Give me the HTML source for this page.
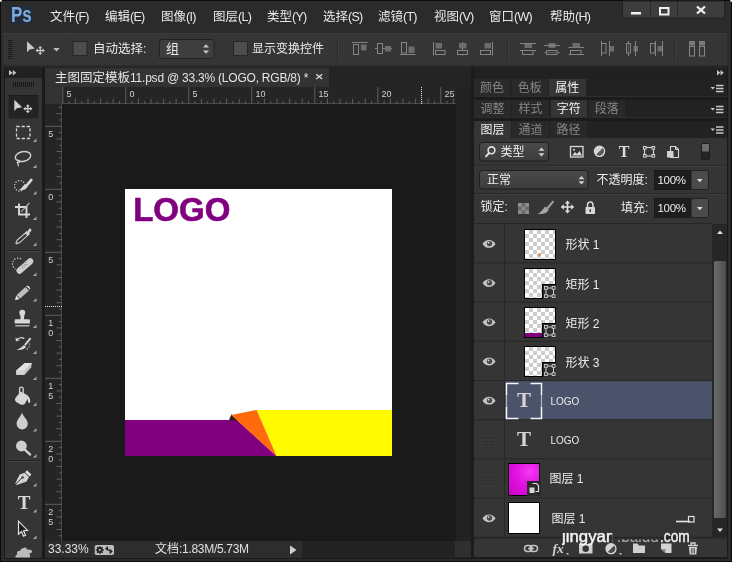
<!DOCTYPE html>
<html><head><meta charset="utf-8">
<style>
html,body{margin:0;padding:0;background:#1e1e1e;}
body{width:732px;height:562px;position:relative;overflow:hidden;font-family:"Liberation Sans","Noto Sans CJK SC",sans-serif;font-size:12px;color:#e6e6e6;}
.a{position:absolute;}
.t{position:absolute;white-space:nowrap;line-height:16px;}
svg{position:absolute;overflow:visible;}
.mi{top:9px;font-size:12.5px;color:#e8e8e8;}
.rl{font-size:9px;fill:#d0d0d0;font-family:"Liberation Sans",sans-serif;}
.tab{position:absolute;height:18px;line-height:18px;font-size:12px;text-align:center;color:#868686;background:#292929;overflow:hidden;}
.tab.on{background:#353535;color:#f0f0f0;}
.ln{position:absolute;font-size:12px;line-height:16px;color:#ececec;white-space:nowrap;}
</style></head><body><div id="root" style="position:absolute;left:0;top:0;width:732px;height:562px;will-change:transform;">
<div class="a" style="left:0;top:0;width:730px;height:560px;background:#2b2b2b;border:1px solid #0c0c0c;"></div>
<div class="a" style="left:0;top:0;width:2px;height:1.5px;background:#e8e8e8;border-bottom-right-radius:2px;"></div>
<div class="a" style="left:730px;top:0;width:2px;height:1.5px;background:#e8e8e8;border-bottom-left-radius:2px;"></div>
<div class="a" style="left:4px;top:66px;width:724px;height:492.5px;background:#1a1a1a;"></div>
<div class="a" style="left:3px;top:1px;width:724px;height:31px;background:#2b2b2b;"></div>
<div class="a" style="left:3px;top:33px;width:724px;height:32px;background:#353535;"></div>
<div class="a" style="left:3px;top:33px;width:724px;height:1px;background:#3b3b3b;"></div>
<div class="a" style="left:3px;top:65px;width:724px;height:2px;background:#2a2a2a;"></div>
<div class="a" style="left:10px;top:6px;width:23px;height:18px;background:rgba(20,45,80,0.35);border-radius:2px;"></div><div class="t" style="left:11px;top:2px;font-size:21.5px;line-height:26px;font-weight:bold;color:#7aabe2;transform:scaleX(0.79);transform-origin:0 0;">Ps</div>
<div class="t mi" style="left:50px;">文件<span style="font-size:12.5px;letter-spacing:-0.75px;">(F)</span></div>
<div class="t mi" style="left:105px;">编辑<span style="font-size:12.5px;letter-spacing:-0.75px;">(E)</span></div>
<div class="t mi" style="left:161px;">图像<span style="font-size:12.5px;letter-spacing:-0.75px;">(I)</span></div>
<div class="t mi" style="left:213px;">图层<span style="font-size:12.5px;letter-spacing:-0.75px;">(L)</span></div>
<div class="t mi" style="left:267px;">类型<span style="font-size:12.5px;letter-spacing:-0.75px;">(Y)</span></div>
<div class="t mi" style="left:323px;">选择<span style="font-size:12.5px;letter-spacing:-0.75px;">(S)</span></div>
<div class="t mi" style="left:378px;">滤镜<span style="font-size:12.5px;letter-spacing:-0.75px;">(T)</span></div>
<div class="t mi" style="left:434px;">视图<span style="font-size:12.5px;letter-spacing:-0.75px;">(V)</span></div>
<div class="t mi" style="left:489px;">窗口<span style="font-size:12.5px;letter-spacing:-0.75px;">(W)</span></div>
<div class="t mi" style="left:550px;">帮助<span style="font-size:12.5px;letter-spacing:-0.75px;">(H)</span></div>
<div class="a" style="left:45px;top:67px;width:426px;height:491px;background:#1a1a1a;"></div>
<div class="a" style="left:45px;top:67px;width:426px;height:20px;background:#242424;"></div>
<div class="a" style="left:45px;top:67.5px;width:284px;height:19.5px;background:#333333;"></div>
<div class="t" style="left:55px;top:69.700px;font-size:12.5px;color:#e4e4e4;">主图固定模板<span style="font-size:12px;letter-spacing:-0.22px;">11.psd @ 33.3% (LOGO, RGB/8) *</span></div>
<svg style="left:315px;top:73px;" width="9" height="7" viewBox="0 0 9 7"><path d="M1.200 1.200l6 4.800M7.200 1.200l-6 4.800" stroke="#dcdcdc" stroke-width="1.250" fill="none"/></svg>
<svg style="left:0;top:0;" width="732" height="562" viewBox="0 0 732 562">
<rect x="45" y="87" width="411" height="17" fill="#252525"/>
<rect x="45" y="87" width="17" height="454" fill="#252525"/>
<rect x="45" y="87" width="17" height="17" fill="#333333"/>
<path d="M62 103.5H456M61.5 104V541" stroke="#484848" stroke-width="1" fill="none"/>
<path d="M62.8 104v-17 M69.1 104v-3 M75.4 104v-5.5 M81.7 104v-3 M88.0 104v-5.5 M94.3 104v-3 M100.6 104v-5.5 M106.9 104v-3 M113.2 104v-5.5 M119.5 104v-3 M125.8 104v-17 M132.1 104v-3 M138.4 104v-5.5 M144.7 104v-3 M151.0 104v-5.5 M157.3 104v-3 M163.6 104v-5.5 M169.9 104v-3 M176.2 104v-5.5 M182.5 104v-3 M188.8 104v-17 M195.1 104v-3 M201.4 104v-5.5 M207.7 104v-3 M214.0 104v-5.5 M220.3 104v-3 M226.6 104v-5.5 M232.9 104v-3 M239.2 104v-5.5 M245.5 104v-3 M251.8 104v-17 M258.1 104v-3 M264.4 104v-5.5 M270.7 104v-3 M277.0 104v-5.5 M283.3 104v-3 M289.6 104v-5.5 M295.9 104v-3 M302.2 104v-5.5 M308.5 104v-3 M314.8 104v-17 M321.1 104v-3 M327.4 104v-5.5 M333.7 104v-3 M340.0 104v-5.5 M346.3 104v-3 M352.6 104v-5.5 M358.9 104v-3 M365.2 104v-5.5 M371.5 104v-3 M377.8 104v-17 M384.1 104v-3 M390.4 104v-5.5 M396.7 104v-3 M403.0 104v-5.5 M409.3 104v-3 M415.6 104v-5.5 M421.9 104v-3 M428.2 104v-5.5 M434.5 104v-3 M440.8 104v-17 M447.1 104v-3 M453.4 104v-5.5" stroke="#5e5e5e" stroke-width="1" fill="none"/>
<text class="rl" x="66.5" y="97.2">5</text>
<text class="rl" x="129.5" y="97.2">0</text>
<text class="rl" x="192.5" y="97.2">5</text>
<text class="rl" x="255.5" y="97.2">10</text>
<text class="rl" x="318.5" y="97.2">15</text>
<text class="rl" x="381.5" y="97.2">20</text>
<text class="rl" x="444.5" y="97.2">25</text>
<path d="M62 107.4h-3 M62 113.7h-5.5 M62 120.0h-3 M62 126.3h-17 M62 132.6h-3 M62 138.9h-5.5 M62 145.2h-3 M62 151.5h-5.5 M62 157.8h-3 M62 164.1h-5.5 M62 170.4h-3 M62 176.7h-5.5 M62 183.0h-3 M62 189.3h-17 M62 195.6h-3 M62 201.9h-5.5 M62 208.2h-3 M62 214.5h-5.5 M62 220.8h-3 M62 227.1h-5.5 M62 233.4h-3 M62 239.7h-5.5 M62 246.0h-3 M62 252.3h-17 M62 258.6h-3 M62 264.9h-5.5 M62 271.2h-3 M62 277.5h-5.5 M62 283.8h-3 M62 290.1h-5.5 M62 296.4h-3 M62 302.7h-5.5 M62 309.0h-3 M62 315.3h-17 M62 321.6h-3 M62 327.9h-5.5 M62 334.2h-3 M62 340.5h-5.5 M62 346.8h-3 M62 353.1h-5.5 M62 359.4h-3 M62 365.7h-5.5 M62 372.0h-3 M62 378.3h-17 M62 384.6h-3 M62 390.9h-5.5 M62 397.2h-3 M62 403.5h-5.5 M62 409.8h-3 M62 416.1h-5.5 M62 422.4h-3 M62 428.7h-5.5 M62 435.0h-3 M62 441.3h-17 M62 447.6h-3 M62 453.9h-5.5 M62 460.2h-3 M62 466.5h-5.5 M62 472.8h-3 M62 479.1h-5.5 M62 485.4h-3 M62 491.7h-5.5 M62 498.0h-3 M62 504.3h-17 M62 510.6h-3 M62 516.9h-5.5 M62 523.2h-3 M62 529.5h-5.5 M62 535.8h-3" stroke="#5e5e5e" stroke-width="1" fill="none"/>
<text class="rl" x="48.2" y="136.9">5</text>
<text class="rl" x="48.2" y="199.9">0</text>
<text class="rl" x="48.2" y="262.9">5</text>
<text class="rl" x="48.2" y="325.9">1</text>
<text class="rl" x="48.2" y="336.2">0</text>
<text class="rl" x="48.2" y="388.9">1</text>
<text class="rl" x="48.2" y="399.2">5</text>
<text class="rl" x="48.2" y="451.9">2</text>
<text class="rl" x="48.2" y="462.2">0</text>
<text class="rl" x="48.2" y="514.9">2</text>
<text class="rl" x="48.2" y="525.2">5</text>
<path d="M421.500 87v17M45 306.500h17" stroke="#e0e0e0" stroke-width="1" stroke-dasharray="1 1" fill="none"/>
</svg>
<div class="a" style="left:125px;top:188.5px;width:267px;height:267.5px;background:#fff;"></div>
<div class="t" style="left:133.2px;top:189.5px;font-size:33px;line-height:40px;font-weight:bold;color:#800080;-webkit-text-stroke:0.6px #800080;">LOGO</div>
<svg style="left:125px;top:400px;" width="267" height="56" viewBox="125 400 267 56">
<polygon points="125,420 237,420 276.5,456 125,456" fill="#800080"/>
<polygon points="256.6,410 392,410 392,456 276.5,456" fill="#fffa00"/>
<polygon points="229,420 231.5,414.3 239,421.5" fill="#3a1a20"/>
<polygon points="231.2,415 256.6,410 276.5,456" fill="#ff6a0c"/>
</svg>
<div class="a" style="left:456px;top:87px;width:15px;height:454px;background:#222222;"></div>
<div class="a" style="left:45px;top:541px;width:426px;height:17px;background:#232323;"></div>
<div class="a" style="left:45px;top:541px;width:257px;height:17px;background:#2d2d2d;"></div>
<div class="a" style="left:455px;top:541px;width:16px;height:16px;background:#2f2f2f;"></div>
<div class="t" style="left:48px;top:541px;font-size:12px;color:#e0e0e0;">33.33%</div>
<div class="t" style="left:155px;top:541px;font-size:12px;color:#e0e0e0;">文档<span style="letter-spacing:-0.3px;">:1.83M/5.73M</span></div>
<svg style="left:94px;top:544px;" width="21" height="12" viewBox="94 544 21 12"><rect x="94.700" y="545" width="19.300" height="10" rx="1.800" fill="#bdbdbd"/><circle cx="99.800" cy="550" r="2.900" fill="#262626"/><path d="M99.800 546v8M95.800 550h8M97 547.200l5.600 5.600M102.600 547.200l-5.600 5.600" stroke="#262626" stroke-width="1.300" fill="none"/><circle cx="99.800" cy="550" r="1.100" fill="#bdbdbd"/><path d="M105 548.500l3-2.500v5zM112.800 551.500l-3.200 2.700v-5.400z" fill="#262626"/><path d="M106 548.500l5.500 3" stroke="#262626" stroke-width="1.400" fill="none"/></svg>
<svg style="left:289px;top:545px;" width="8" height="10"><path d="M1 0.5L7.5 5L1 9.5z" fill="#d0d0d0"/></svg>
<!-- TOOLS PANEL -->
<div class="a" style="left:5px;top:67px;width:37px;height:491px;background:#353535;"></div>
<div class="a" style="left:5px;top:67px;width:37px;height:11px;background:#212121;"></div>
<div class="a" style="left:8px;top:95px;width:30.500px;height:23.500px;background:#232323;border:1px solid #2c2c2c;box-sizing:border-box;border-top-color:#1b1b1b;"></div>
<svg style="left:0;top:0;" width="50" height="562" viewBox="0 0 50 562">
<g fill="#d2d2d2" stroke="none">
<!-- collapse >> -->
<path d="M9 70l3.6 2.7L9 75.4zM12.8 70l3.6 2.7L12.8 75.4z" fill="#c8c8c8"/>
<!-- grip -->
<path d="M13.5 82v5M15.5 82v5M17.5 82v5M19.5 82v5M21.500 82v5M23.500 82v5M25.500 82v5M27.500 82v5M29.500 82v5M31.500 82v5M33.500 82v5" stroke="#161616" stroke-width="1" fill="none"/>
<!-- corner triangles -->
<g fill="#a8a8a8">
<path d="M36.5 138.5v3.5h-3.5z"/><path d="M36.5 164.5v3.5h-3.5z"/><path d="M36.5 191v3.5h-3.5z"/><path d="M36.5 216.5v3.5h-3.5z"/><path d="M36.5 242.5v3.5h-3.5z"/>
<path d="M36.5 272.5v3.5h-3.5z"/><path d="M36.5 298v3.5h-3.5z"/><path d="M36.5 324.5v3.5h-3.5z"/><path d="M36.5 350.5v3.5h-3.5z"/><path d="M36.5 376.5v3.5h-3.5z"/>
<path d="M36.5 402.5v3.5h-3.5z"/><path d="M36.5 428v3.5h-3.5z"/><path d="M36.5 454v3.5h-3.5z"/><path d="M36.5 483v3.5h-3.5z"/><path d="M36.5 509v3.5h-3.5z"/><path d="M36.5 535.5v3.5h-3.5z"/>
</g>
<!-- separators -->
<path d="M8 250.5h32M8 460.5h32" stroke="#262626" stroke-width="1" fill="none"/>
<path d="M8 251.5h32M8 461.5h32" stroke="#414141" stroke-width="1" fill="none"/>
<!-- move -->
<path d="M14.3 99.8v11.2l2.6-2.7l5.3-1.1z" fill="#cfcfcf"/>
<path d="M27.8 104.2l2 2.3h-1.4v1.6h1.7v-1.4l2.3 2l-2.3 2v-1.4h-1.7v1.7h1.4l-2 2.3l-2-2.3h1.4v-1.7h-1.7v1.4l-2.3-2l2.3-2v1.4h1.7v-1.6h-1.4z" fill="#d8d8d8"/>
<!-- marquee -->
<rect x="16.5" y="126.5" width="13.5" height="12" fill="none" stroke="#d8d8d8" stroke-width="1.3" stroke-dasharray="3.2 1.9"/>
<!-- lasso -->
<ellipse cx="23" cy="156.5" rx="7.8" ry="4.8" transform="rotate(-12 23 156.5)" fill="none" stroke="#cfcfcf" stroke-width="1.4"/>
<path d="M17.3 160.2c1.5-0.3 2.6 0.6 2.1 1.8c-0.5 1-2 0.8-2.3-0.2c0.3 1.6 1.6 2.6 1.3 4.6" fill="none" stroke="#cfcfcf" stroke-width="1.2"/>
<!-- quick select -->
<circle cx="19.8" cy="185.8" r="5.3" fill="none" stroke="#d8d8d8" stroke-width="1.3" stroke-dasharray="1.2 1.6"/>
<path d="M31 178.300l2 1.700l-5.600 6.800l-2.100-1.800z" fill="#d6d6d6"/>
<path d="M24.800 184.200l2.800 2.400c-0.800 2.400-3.800 4-8.800 3.400c2.400-1 3.400-3.200 6-5.800z" fill="#d6d6d6"/>
<!-- crop -->
<path d="M19 203.5v11h11M15 207h11.5v11" fill="none" stroke="#d8d8d8" stroke-width="1.9"/>
<path d="M29.5 202.8l-8.5 9.2" fill="none" stroke="#c0c0c0" stroke-width="1.1"/>
<!-- eyedropper -->
<path d="M29.3 228.7c1.2-0.6 2.6 0.8 2 2l-2.2 2.6l0.8 0.9l-1.3 1.4l-3.5-3.3l1.4-1.3l0.8 0.7z" fill="#d6d6d6"/>
<path d="M25.4 233.1l2.3 2.2l-8 7.3l-3.2 1.2l-0.6-0.6l1.3-3z" fill="none" stroke="#d0d0d0" stroke-width="1.1"/>
<!-- healing -->
<path d="M19.6 270.600l10.600-9.200" stroke="#cdcdcd" stroke-width="6.200" stroke-linecap="round" fill="none"/>
<path d="M22.300 267.300l1 1M24.200 265.700l1 1M26 264.100l1 1M21.600 265.200l1 1M23.500 263.600l1 1M25.300 262l1 1" stroke="#6a6a6a" stroke-width="0.9" fill="none"/>
<path d="M21 258.9a5.6 5.6 0 0 0 -5.6 10" fill="none" stroke="#d8d8d8" stroke-width="1.3" stroke-dasharray="1.2 1.6"/>
<!-- pencil -->
<path d="M26.2 286.2l3.6 3.4c1.4-1.6-1.6-4.8-3.6-3.4z" fill="#e0e0e0"/>
<path d="M25.4 287l3.6 3.4l-8.8 8l-3.5-3.4z" fill="#bdbdbd"/>
<path d="M16.2 295.6l3.4 3.3l-4.6 1.4z" fill="#e4e4e4"/>
<!-- stamp -->
<path d="M22.4 309.800a2.900 2.900 0 0 1 2.900 2.900c0 1.600-1.200 2.400-1.200 4v2.600h4.800a1 1 0 0 1 1 1v3.200h-15.200v-3.200a1 1 0 0 1 1-1h4.800v-2.600c0-1.600-1.200-2.400-1.200-4a2.900 2.900 0 0 1 2.900-2.900z" fill="#d8d8d8"/>
<path d="M15.300 325.800h14.200" stroke="#d0d0d0" stroke-width="1.200" fill="none"/>
<!-- history brush -->
<path d="M29.8 337.600l1.500 1.200l-5.600 7l-1.500-1.200z" fill="#d6d6d6"/>
<path d="M24 345l1.900 1.700c-0.700 2-3.600 3.600-9.700 3.300c3-0.800 4.800-2.600 7.800-5z" fill="#d6d6d6"/>
<path d="M16.500 340.300c2-2.600 5.400-3.200 7.800-1.600" fill="none" stroke="#d0d0d0" stroke-width="1.500"/>
<path d="M15.500 337.400l0.400 4.200l3.800-1.400z" fill="#d0d0d0"/>
<path d="M29.600 343.500a6.500 6.500 0 0 1 -3.200 6" fill="none" stroke="#c8c8c8" stroke-width="1.200" stroke-dasharray="1.200 1.500"/>
<!-- eraser -->
<path d="M16.200 370.600l8.600-7.600h7l-0.600 4.600l-6.600 7.200h-8.400z" fill="#c4c4c4"/>
<path d="M16.200 370.600l8.600-7.600h7l-7.400 7.600z" fill="#e2e2e2"/>
<path d="M16.200 370.600h8.200v4.200h-8.200z" fill="#d4d4d4"/>
<!-- bucket -->
<path d="M20.600 391.600l6.400 3.400c1.600 1 1.600 2.400 0.600 4l-2.600 4.400c-1 1.600-2.800 1.800-4.400 1l-4-2.200c-1.600-1-2-2.600-1.200-4.200z" fill="#d6d6d6"/>
<path d="M19.600 394v-5c0-2.600 3.600-2.600 3.600 0v7" fill="none" stroke="#d6d6d6" stroke-width="1.300"/>
<path d="M27.200 395.400c2.200 1.600 3.200 3.600 3 6.400c-0.100 1.500-2.200 1.500-2.200 0c0-2-0.300-3.600-0.800-6.400z" fill="#e0e0e0"/>
<!-- blur drop -->
<path d="M22 412.600c1 4 5.800 6.800 5.800 11.200a5.600 5.600 0 0 1 -11.200 0c0-4.400 4.400-7.200 5.400-11.200z" fill="#cfcfcf"/>
<!-- dodge -->
<circle cx="21.400" cy="446" r="5.400" fill="#cfcfcf"/>
<path d="M24.800 449.600l5.400 5" stroke="#d6d6d6" stroke-width="2.200" stroke-linecap="round" fill="none"/>
<!-- pen -->
<path d="M27 470.200l4.400 4.200l-1.800 2l-4.500-4.200z" fill="#dedede"/>
<path d="M24.600 472.800l4.400 4.200l-2.400 4.600l-10 3.400l-1.400-1.400l4.400-9.200z" fill="#d2d2d2"/>
<path d="M15.800 484l6.200-6.200" stroke="#353535" stroke-width="1" fill="none"/>
<circle cx="22.600" cy="477.400" r="1.200" fill="#353535"/>
<!-- path select arrow -->
<path d="M18.500 521.200v13l3-2.700l2 4.600l2-0.900l-2-4.500l4-0.300z" fill="#1c1c1c" stroke="#e0e0e0" stroke-width="1.200" stroke-linejoin="miter"/>
<!-- custom shape -->
<path d="M24 548c1.600-1.200 3.200 0 2.800 1.800c2-1 5 0 5.400 1.400c0.300 1.400-2 2-3.400 2.600c1.400 1 2 2.600 0.800 3.800l-14 0c-0.800-1.400 0.400-2.800 2-3.400c-1.600-1.600 0-3.800 2.400-3.200c0.200-1.800 2.400-3 4-3z" fill="#bcbcbc"/>
</g>
<!-- T -->
<text x="24.200" y="509" text-anchor="middle" font-family="Liberation Serif, serif" font-size="19" font-weight="bold" fill="#d8d8d8">T</text>
</svg>
<!-- OPTIONS BAR -->
<svg style="left:0;top:0;" width="732" height="70" viewBox="0 0 732 70">
<!-- grip -->
<path d="M8 40.500h4.500M8 42.500h4.500M8 44.500h4.500M8 46.500h4.500M8 48.500h4.500M8 50.500h4.500M8 52.500h4.500M8 54.500h4.500M8 56.500h4.500M8 58.500h4.500" stroke="#1d1d1d" stroke-width="1" fill="none"/>
<!-- move icon -->
<path d="M27 41.300v11l2.600-2.700l5.200-1z" fill="#c8c8c8"/>
<path d="M40.200 46l2 2.300h-1.400v1.600h1.700v-1.400l2.300 2l-2.300 2v-1.400h-1.700v1.700h1.400l-2 2.300l-2-2.300h1.400v-1.700h-1.700v1.400l-2.300-2l2.300-2v1.400h1.700v-1.600h-1.400z" fill="#d0d0d0"/>
<path d="M53.200 48h6.600l-3.300 3.500z" fill="#bdbdbd"/>
<path d="M66.500 37v25" stroke="#303030" stroke-width="1" fill="none"/>
<!-- checkbox 1 -->
<rect x="73" y="41.500" width="14" height="14" fill="#4d4d4d" stroke="#262626" stroke-width="1"/>
<!-- dropdown -->
<rect x="159.500" y="39.500" width="54.500" height="19" rx="2.500" fill="#3e3e3e" stroke="#222222" stroke-width="1"/>
<path d="M203 47.500l3-3.200l3 3.200zM203 50.500l3 3.200l3-3.200z" fill="#c8c8c8"/>
<!-- checkbox 2 -->
<rect x="233.500" y="41.500" width="14" height="14" fill="#4d4d4d" stroke="#262626" stroke-width="1"/>
<path d="M337.500 37v25M507.500 37v25M674.500 37v25" stroke="#2a2a2a" stroke-width="1" fill="none"/>
<path d="M338.500 37v25M508.500 37v25M675.500 37v25" stroke="#3d3d3d" stroke-width="1" fill="none"/>
<g stroke="#858585" stroke-width="1" fill="none">
<!-- 1 -->
<path d="M352 42.500h15.500"/><rect x="353.500" y="44.500" width="5" height="10"/>
<!-- 2 -->
<path d="M375 48.500h17"/><rect x="377.500" y="43.500" width="5" height="10" fill="#353535"/>
<!-- 3 -->
<path d="M400 54.500h15.500"/><rect x="401.500" y="42.500" width="5" height="10.500"/>
<!-- 4 -->
<path d="M433.500 42v13.500"/><rect x="435.500" y="50.500" width="9.500" height="4"/>
<!-- 5 -->
<path d="M462.500 42v13.500"/><rect x="457.500" y="50.500" width="10" height="4" fill="#353535"/>
<!-- 6 -->
<path d="M492.500 42v13.500"/><rect x="480.500" y="50.500" width="10" height="4"/>
<!-- 7 -->
<path d="M520 43.500h16M520 50.500h16"/><rect x="522.500" y="50.500" width="10.500" height="4"/>
<!-- 8 -->
<path d="M544.500 45.500h15M544.500 52.500h15"/><rect x="546.500" y="50.500" width="10.500" height="4" fill="#353535"/><path d="M546.500 52.500h10.500" stroke="#5a5a5a"/>
<!-- 9 -->
<path d="M568.500 47.500h15.500M568.500 54.500h15.500"/><rect x="570.500" y="50.500" width="10.500" height="4"/>
<!-- 10 -->
<path d="M601.500 41v15M609.500 41v15"/><rect x="601.500" y="43.500" width="4.500" height="9.500"/>
<!-- 11 -->
<path d="M628.500 41v15M635.500 41v15"/><rect x="626.500" y="43.500" width="4" height="9.500" fill="#353535"/><path d="M628.500 43.500v9.500" stroke="#5a5a5a"/>
<!-- 12 -->
<path d="M655.500 41v15M662.500 41v15"/><rect x="650.500" y="43.500" width="4.500" height="9.500"/>
<!-- 13 -->
<rect x="689.500" y="46.500" width="5" height="9.500"/><rect x="699.500" y="46.500" width="5" height="9.500"/>
</g>
<g fill="#6c6c6c">
<rect x="361" y="44.500" width="5.500" height="6"/>
<rect x="385" y="46" width="6" height="5.500"/>
<rect x="408.500" y="46.500" width="6" height="6.500"/>
<rect x="435.500" y="43" width="6.500" height="5.500"/>
<rect x="459" y="43" width="7.500" height="5.500"/>
<rect x="484.500" y="43" width="6.500" height="5.500"/>
<rect x="524.500" y="44" width="7.500" height="4"/>
<rect x="548.500" y="43" width="7" height="5"/>
<rect x="572.500" y="43" width="7.500" height="4.500"/>
<rect x="610" y="46" width="4" height="5.500"/>
<rect x="633.500" y="46" width="4.500" height="5.500"/>
<rect x="657.500" y="46" width="4.500" height="5.500"/>
<rect x="689" y="41" width="6" height="4.500" fill="#7a7a7a"/><rect x="699" y="41" width="6" height="4.500" fill="#7a7a7a"/>
</g>
<path d="M544.500 45.500h15M635.500 41v15" stroke="#858585" stroke-width="1" fill="none"/>
<!-- window buttons -->
<path d="M622.500 1h102v14a3 3 0 0 1 -3 3h-96a3 3 0 0 1 -3-3z" fill="#3d3d3d" stroke="#222222" stroke-width="1"/>
<path d="M650.500 1v17M677.500 1v17" stroke="#262626" stroke-width="1" fill="none"/>
<rect x="631" y="12" width="10" height="2.500" fill="#f0f0f0"/>
<rect x="660" y="8" width="8.500" height="6.500" fill="none" stroke="#f0f0f0" stroke-width="2"/>
<path d="M697 6.500l8 7M705 6.500l-8 7" stroke="#f0f0f0" stroke-width="2.300" fill="none"/>
</svg>
<div class="t" style="left:93px;top:41px;font-size:12.500px;color:#e8e8e8;">自动选择:</div>
<div class="t" style="left:166px;top:41px;font-size:13px;color:#e8e8e8;">组</div>
<div class="t" style="left:252px;top:41px;font-size:12px;color:#e8e8e8;">显示变换控件</div>
<!-- RIGHT PANELS -->
<div class="a" style="left:471px;top:67px;width:3px;height:491px;background:#1c1c1c;"></div>
<div class="a" style="left:474px;top:67px;width:253px;height:490px;background:#353535;"></div>
<div class="a" style="left:474px;top:67px;width:253px;height:11px;background:#212121;"></div>
<div class="a" style="left:474px;top:78px;width:253px;height:60px;background:#222222;"></div>
<div class="a" style="left:474px;top:96px;width:253px;height:1px;background:#2e2e2e;"></div>
<div class="a" style="left:474px;top:97px;width:253px;height:3px;background:#1b1b1b;"></div>
<div class="a" style="left:474px;top:117px;width:253px;height:1px;background:#2e2e2e;"></div>
<div class="a" style="left:474px;top:118px;width:253px;height:2.5px;background:#1b1b1b;"></div>
<div class="tab" style="left:474px;top:79px;width:36px;height:17px;line-height:18.5px;">颜色</div>
<div class="tab" style="left:512px;top:79px;width:35.5px;height:17px;line-height:18.5px;">色板</div>
<div class="tab on" style="left:549px;top:79px;width:36.5px;height:17px;line-height:18.5px;">属性</div>
<div class="tab" style="left:474px;top:100px;width:37px;height:17px;line-height:18.5px;">调整</div>
<div class="tab" style="left:512px;top:100px;width:37px;height:17px;line-height:18.5px;">样式</div>
<div class="tab on" style="left:550.5px;top:100px;width:36.5px;height:17px;line-height:18.5px;">字符</div>
<div class="tab" style="left:588.5px;top:100px;width:36.5px;height:17px;line-height:18.5px;">段落</div>
<div class="tab on" style="left:474px;top:120.5px;width:37px;height:17.5px;line-height:19.4px;">图层</div>
<div class="tab" style="left:512px;top:120.5px;width:37px;height:17.5px;line-height:19.4px;">通道</div>
<div class="tab" style="left:550px;top:120.5px;width:37px;height:17.5px;line-height:19.4px;">路径</div>
<svg style="left:0;top:0;" width="732" height="562" viewBox="0 0 732 562">
<path d="M717 70l3.300 2.700l-3.300 2.700zM720.500 70l3.300 2.700l-3.300 2.700z" fill="#c8c8c8"/>
<path d="M710.500 87h4.500l-2.250 2.600z" fill="#c8c8c8"/><path d="M716 85.5h7.500M716 88.5h7.500M716 91.5h7.500" stroke="#c8c8c8" stroke-width="1.300" fill="none"/>
<path d="M710.500 108h4.500l-2.250 2.600z" fill="#c8c8c8"/><path d="M716 106.5h7.500M716 109.5h7.500M716 112.5h7.500" stroke="#c8c8c8" stroke-width="1.300" fill="none"/>
<path d="M710.500 128.5h4.500l-2.250 2.600z" fill="#c8c8c8"/><path d="M716 127.0h7.500M716 130.0h7.500M716 133.0h7.500" stroke="#c8c8c8" stroke-width="1.300" fill="none"/>
<path d="M474 165.500h253M474 193.500h253" stroke="#2a2a2a" stroke-width="1" fill="none"/>
<path d="M474 166.500h253M474 194.500h253" stroke="#3c3c3c" stroke-width="1" fill="none"/>
<defs><linearGradient id="gd" x1="0" y1="0" x2="0" y2="1"><stop offset="0" stop-color="#4a4a4a"/><stop offset="1" stop-color="#3c3c3c"/></linearGradient></defs>
<rect x="479.500" y="142.500" width="69" height="18.500" rx="3" fill="url(#gd)" stroke="#1f1f1f" stroke-width="1"/>
<circle cx="491.500" cy="150.300" r="3.400" fill="none" stroke="#e0e0e0" stroke-width="1.600"/><path d="M489 153l-3 3.300" stroke="#e0e0e0" stroke-width="2" stroke-linecap="round" fill="none"/>
<path d="M538.500 150.700l3-3.200l3 3.200zM538.500 153.300l3 3.200l3-3.200z" fill="#d0d0d0"/>
<rect x="570.500" y="146.500" width="12.500" height="10.500" fill="none" stroke="#d8d8d8" stroke-width="1.300"/><path d="M572 155.500l3-3.600l2 2l2.500-3l2.500 4.600z" fill="#d8d8d8"/><circle cx="574" cy="149.800" r="1" fill="#d8d8d8"/>
<circle cx="599.500" cy="151.300" r="5.200" fill="#d4d4d4"/><path d="M596 154.800a5 5 0 0 0 7-7z" fill="#5a5a5a"/><circle cx="599.500" cy="151.300" r="5.200" fill="none" stroke="#d8d8d8" stroke-width="1.200"/>
<text x="624" y="156.500" text-anchor="middle" font-family="Liberation Serif, serif" font-size="16" font-weight="bold" fill="#dcdcdc">T</text>
<rect x="644.500" y="147.500" width="9" height="8.500" fill="none" stroke="#d8d8d8" stroke-width="1.100"/><g fill="#353535" stroke="#d8d8d8" stroke-width="1"><rect x="643.500" y="146.500" width="2.600" height="2.600"/><rect x="652" y="146.500" width="2.600" height="2.600"/><rect x="643.500" y="154.500" width="2.600" height="2.600"/><rect x="652" y="154.500" width="2.600" height="2.600"/></g>
<path d="M670.500 146.500h5l3 3v8h-8z" fill="none" stroke="#d8d8d8" stroke-width="1.100"/><path d="M675.500 146.500v3h3" fill="none" stroke="#d8d8d8" stroke-width="1"/><rect x="667" y="151" width="6.500" height="6.500" fill="#d0d0d0"/>
<rect x="701.500" y="143.500" width="8" height="16" rx="1" fill="#252525" stroke="#1c1c1c" stroke-width="1"/><rect x="702" y="144" width="7" height="7.500" fill="#6e6e6e"/>
<rect x="479.500" y="170.500" width="108.500" height="18.500" rx="3" fill="url(#gd)" stroke="#1f1f1f" stroke-width="1"/>
<path d="M578.500 179.200l3-3.200l3 3.200zM578.500 181.300l3 3.200l3-3.200z" fill="#d0d0d0"/>
<rect x="654.500" y="170.5" width="36" height="19" fill="#1e1e1e" stroke="#191919" stroke-width="1"/>
<rect x="691" y="170.5" width="17.500" height="19" rx="2" fill="#4b4b4b" stroke="#222222" stroke-width="1"/>
<path d="M697 179.0h5.600l-2.800 3.200z" fill="#e0e0e0"/>
<rect x="654.500" y="198.5" width="36" height="19" fill="#1e1e1e" stroke="#191919" stroke-width="1"/>
<rect x="691" y="198.5" width="17.500" height="19" rx="2" fill="#4b4b4b" stroke="#222222" stroke-width="1"/>
<path d="M697 207.0h5.600l-2.800 3.200z" fill="#e0e0e0"/>
<g><rect x="518" y="203" width="11" height="11" fill="#6a6a6a"/><g fill="#8e8e8e"><rect x="518" y="203" width="3.700" height="3.700"/><rect x="525.300" y="203" width="3.700" height="3.700"/><rect x="521.700" y="206.700" width="3.600" height="3.600"/><rect x="518" y="210.300" width="3.700" height="3.700"/><rect x="525.300" y="210.300" width="3.700" height="3.700"/></g></g>
<path d="M552.600 200.400l1.700 1.400l-6.200 7.400l-1.700-1.400z" fill="#9c9c9c"/><path d="M545.200 206.600l3.400 2.900c-0.600 3-4.400 5-11 4.400c2.800-1.200 4.800-3.600 7.600-7.300z" fill="#a4a4a4"/>
<path d="M567.500 200.500l2.700 3h-1.900v2.700h2.900v-1.900l3 2.700l-3 2.700v-1.900h-2.900v2.800h1.900l-2.700 3l-2.700-3h1.900v-2.800h-2.900v1.900l-3-2.700l3-2.700v1.900h2.900v-2.700h-1.900z" fill="#e0e0e0"/>
<rect x="585.500" y="207" width="9.500" height="7" rx="0.800" fill="#d8d8d8"/><path d="M587.500 207v-2.200a2.750 2.750 0 0 1 5.500 0v2.200" fill="none" stroke="#d8d8d8" stroke-width="1.500"/><rect x="589.600" y="209.200" width="1.400" height="2.800" fill="#353535"/>
<path d="M474 223.500h238" stroke="#262626" stroke-width="1" fill="none"/>
<rect x="504.500" y="381.20000000000005" width="207.500" height="38.600" fill="#4b536b"/>
<path d="M474 262.9h238 M474 302.1h238 M474 341.3h238 M474 380.5h238 M474 419.70000000000005h238 M474 458.9h238 M474 498.1h238 M474 537.3000000000001h238" stroke="#272727" stroke-width="1" fill="none"/>
<path d="M504.500 224v314" stroke="#282828" stroke-width="1" fill="none"/>
<path d="M712.500 224v314" stroke="#282828" stroke-width="1" fill="none"/>
<path d="M482.500 243.9c3-5.200 10-5.200 13 0c-3 5.200-10 5.200-13 0z" fill="#c4c4c4"/><circle cx="489.500" cy="243.6" r="2.700" fill="#4a4a4a"/><circle cx="488.600" cy="242.70000000000002" r="0.900" fill="#d8d8d8"/>
<path d="M482.500 283.1c3-5.200 10-5.200 13 0c-3 5.200-10 5.200-13 0z" fill="#c4c4c4"/><circle cx="489.500" cy="282.8" r="2.700" fill="#4a4a4a"/><circle cx="488.600" cy="281.90000000000003" r="0.900" fill="#d8d8d8"/>
<path d="M482.500 322.3c3-5.200 10-5.200 13 0c-3 5.200-10 5.200-13 0z" fill="#c4c4c4"/><circle cx="489.500" cy="322.0" r="2.700" fill="#4a4a4a"/><circle cx="488.600" cy="321.1" r="0.900" fill="#d8d8d8"/>
<path d="M482.500 361.5c3-5.200 10-5.200 13 0c-3 5.200-10 5.200-13 0z" fill="#c4c4c4"/><circle cx="489.500" cy="361.2" r="2.700" fill="#4a4a4a"/><circle cx="488.600" cy="360.3" r="0.900" fill="#d8d8d8"/>
<path d="M482.500 400.70000000000005c3-5.200 10-5.200 13 0c-3 5.200-10 5.200-13 0z" fill="#c4c4c4"/><circle cx="489.500" cy="400.40000000000003" r="2.700" fill="#4a4a4a"/><circle cx="488.600" cy="399.50000000000006" r="0.900" fill="#d8d8d8"/>
<path d="M482.500 518.3000000000001c3-5.200 10-5.200 13 0c-3 5.200-10 5.200-13 0z" fill="#c4c4c4"/><circle cx="489.500" cy="518.0000000000001" r="2.700" fill="#4a4a4a"/><circle cx="488.600" cy="517.1" r="0.900" fill="#d8d8d8"/>
<rect x="481.500" y="434.4" width="13.500" height="13" fill="#3b3b3b"/><path d="M484 434.4v13M487 434.4v13M490 434.4v13M493 434.4v13M481.500 437.9h13.500M481.500 441.4h13.500M481.500 444.9h13.500" stroke="#303030" stroke-width="1" fill="none"/>
<rect x="481.500" y="473.6" width="13.500" height="13" fill="#3b3b3b"/><path d="M484 473.6v13M487 473.6v13M490 473.6v13M493 473.6v13M481.500 477.1h13.500M481.500 480.6h13.500M481.500 484.1h13.500" stroke="#303030" stroke-width="1" fill="none"/>
<rect x="713" y="224" width="14" height="313.500" fill="#262626"/>
<defs><linearGradient id="gs" x1="0" y1="0" x2="1" y2="0"><stop offset="0" stop-color="#6a6a6a"/><stop offset="0.5" stop-color="#5c5c5c"/><stop offset="1" stop-color="#4c4c4c"/></linearGradient></defs>
<rect x="714" y="261" width="12" height="257" rx="1.500" fill="url(#gs)"/>
<path d="M717 234l3-3.600l3 3.600z" fill="#e0e0e0"/><path d="M717 528.500l3 3.600l3-3.600z" fill="#e0e0e0"/>
<path d="M474 538h253" stroke="#262626" stroke-width="1.200" fill="none"/>
<g fill="none" stroke="#c4c4c4" stroke-width="1.500"><rect x="524.500" y="545.500" width="7.500" height="6" rx="3"/><rect x="530" y="545.500" width="7.500" height="6" rx="3"/></g><path d="M528 548.500h6" stroke="#c4c4c4" stroke-width="1.300" fill="none"/>
<rect x="579" y="544" width="13.500" height="9.500" fill="#d0d0d0"/><circle cx="585.700" cy="548.700" r="3.200" fill="#353535"/>
<circle cx="611" cy="548.700" r="5" fill="#d4d4d4"/><path d="M607.500 552.200a5 5 0 0 0 7-7z" fill="#4a4a4a"/><circle cx="611" cy="548.700" r="5" fill="none" stroke="#d8d8d8" stroke-width="1.200"/><rect x="619.500" y="553" width="2" height="1.500" fill="#c8c8c8"/>
<path d="M633 543.500h4.500l1.500 2h6v7.500h-12z" fill="#cfcfcf"/>
<path d="M661 543.500h10.500v9.500h-6l-4.500-4z" fill="#d4d4d4"/><path d="M661 549h4.500v4z" fill="#8a8a8a"/>
<path d="M688 545.500h10M691 545v-2h4v2" stroke="#d4d4d4" stroke-width="1.300" fill="none"/><path d="M689 547h8l-0.700 7.500h-6.600z" fill="#d4d4d4"/><path d="M691.500 548v5.500M693 548v5.500M694.500 548v5.500" stroke="#353535" stroke-width="0.700" fill="none"/>
<rect x="566.500" y="553" width="2" height="1.500" fill="#c8c8c8"/>
<path d="M676 521.500h14" stroke="#e8e8e8" stroke-width="1.600" fill="none"/><rect x="688.500" y="516.500" width="5.500" height="5.500" fill="none" stroke="#e0e0e0" stroke-width="1.200"/>
</svg>
<div class="a" style="left:524px;top:228.70000000000002px;width:30px;height:29px;border:1px solid #000;background:repeating-conic-gradient(#cdcdcd 0% 25%,#ffffff 0% 50%) 0 0/8px 8px;"><div class="a" style="left:13px;top:23px;width:3px;height:3px;border-radius:2px;background:#e08a40;"></div></div>
<div class="a" style="left:524px;top:267.90000000000003px;width:30px;height:29px;border:1px solid #000;background:repeating-conic-gradient(#cdcdcd 0% 25%,#ffffff 0% 50%) 0 0/8px 8px;"><svg style="left:17px;top:15px;" width="14" height="15" viewBox="0 0 14 15"><rect x="0" y="0" width="14" height="15" fill="#2e2e2e"/><path d="M0.500 15V0.500H14" fill="none" stroke="#000" stroke-width="1.200"/><rect x="4" y="4" width="7.500" height="8" fill="none" stroke="#d0d0d0" stroke-width="1"/><g fill="#2e2e2e" stroke="#d0d0d0" stroke-width="0.900"><rect x="2.500" y="2.500" width="2.800" height="2.800"/><rect x="10.200" y="2.500" width="2.800" height="2.800"/><rect x="2.500" y="10.700" width="2.800" height="2.800"/><rect x="10.200" y="10.700" width="2.800" height="2.800"/></g></svg></div>
<div class="a" style="left:524px;top:307.1px;width:30px;height:29px;border:1px solid #000;background:repeating-conic-gradient(#cdcdcd 0% 25%,#ffffff 0% 50%) 0 0/8px 8px;"><div class="a" style="left:0;top:25px;width:18px;height:4px;background:#800080;"></div><svg style="left:17px;top:15px;" width="14" height="15" viewBox="0 0 14 15"><rect x="0" y="0" width="14" height="15" fill="#2e2e2e"/><path d="M0.500 15V0.500H14" fill="none" stroke="#000" stroke-width="1.200"/><rect x="4" y="4" width="7.500" height="8" fill="none" stroke="#d0d0d0" stroke-width="1"/><g fill="#2e2e2e" stroke="#d0d0d0" stroke-width="0.900"><rect x="2.500" y="2.500" width="2.800" height="2.800"/><rect x="10.200" y="2.500" width="2.800" height="2.800"/><rect x="2.500" y="10.700" width="2.800" height="2.800"/><rect x="10.200" y="10.700" width="2.800" height="2.800"/></g></svg></div>
<div class="a" style="left:524px;top:346.3px;width:30px;height:29px;border:1px solid #000;background:repeating-conic-gradient(#cdcdcd 0% 25%,#ffffff 0% 50%) 0 0/8px 8px;"><svg style="left:17px;top:15px;" width="14" height="15" viewBox="0 0 14 15"><rect x="0" y="0" width="14" height="15" fill="#2e2e2e"/><path d="M0.500 15V0.500H14" fill="none" stroke="#000" stroke-width="1.200"/><rect x="4" y="4" width="7.500" height="8" fill="none" stroke="#d0d0d0" stroke-width="1"/><g fill="#2e2e2e" stroke="#d0d0d0" stroke-width="0.900"><rect x="2.500" y="2.500" width="2.800" height="2.800"/><rect x="10.200" y="2.500" width="2.800" height="2.800"/><rect x="2.500" y="10.700" width="2.800" height="2.800"/><rect x="10.200" y="10.700" width="2.800" height="2.800"/></g></svg></div>
<svg style="left:505px;top:381.6px;" width="38" height="38" viewBox="0 0 38 38"><path d="M1.500 12V36.500M36.500 12V36.500" fill="none" stroke="#f4f4f4" stroke-opacity="0.600" stroke-width="1.200"/><path d="M1.500 13V1.500H13.500M25.500 1.500H36.500V13M36.500 25V36.500H25.500M13.500 36.500H1.500V25" fill="none" stroke="#f6f6f6" stroke-width="1.400"/></svg>
<div class="t" style="left:515px;top:387.20000000000005px;width:18px;text-align:center;font-family:'Liberation Serif',serif;font-size:21px;line-height:26px;color:#d4d4d4;font-weight:bold;">T</div>
<div class="t" style="left:515px;top:426.4px;width:18px;text-align:center;font-family:'Liberation Serif',serif;font-size:21px;line-height:26px;color:#d4d4d4;font-weight:bold;">T</div>
<div class="a" style="left:508px;top:462.8px;width:30px;height:31px;border:1px solid #000;background:radial-gradient(circle at 70% 25%,#f23cf0 0%,#e516e2 40%,#c800c8 100%);"><svg style="left:18px;top:17px;" width="14" height="15" viewBox="0 0 14 15"><rect x="0" y="0" width="14" height="15" fill="#2a2a2a"/><path d="M5.500 2.500h4l2 2v6h-3" fill="none" stroke="#e0e0e0" stroke-width="1.200"/><rect x="2.500" y="6.500" width="5" height="5.500" fill="#d8d8d8"/></svg></div>
<div class="a" style="left:508px;top:502.30000000000007px;width:30px;height:30px;border:1px solid #000;background:#fff;"></div>
<div class="ln" style="left:565.5px;top:237.3px;font-size:12px;">形状 1</div>
<div class="ln" style="left:565.5px;top:276.5px;font-size:12px;">矩形 1</div>
<div class="ln" style="left:565.5px;top:315.7px;font-size:12px;">矩形 2</div>
<div class="ln" style="left:565.5px;top:354.9px;font-size:12px;">形状 3</div>
<div class="ln" style="left:550.5px;top:394.00000000000006px;font-size:10px;">LOGO</div>
<div class="ln" style="left:550.5px;top:433.2px;font-size:10px;">LOGO</div>
<div class="ln" style="left:549.5px;top:471.20000000000005px;font-size:12px;">图层 1</div>
<div class="ln" style="left:551.5px;top:511.4000000000001px;font-size:12px;">图层 1</div>
<div class="ln" style="left:500.500px;top:143.500px;">类型</div>
<div class="ln" style="left:487px;top:171.500px;">正常</div>
<div class="ln" style="left:596.500px;top:171.500px;">不透明度:</div>
<div class="ln" style="left:657.500px;top:172px;font-size:11.500px;letter-spacing:-0.300px;">100%</div>
<div class="ln" style="left:480.500px;top:198.500px;">锁定:</div>
<div class="ln" style="left:621px;top:199.500px;">填充:</div>
<div class="ln" style="left:657.500px;top:200px;font-size:11.500px;letter-spacing:-0.300px;">100%</div>
<div class="ln" style="left:552.500px;top:540.500px;font-size:13.500px;font-style:italic;font-weight:bold;font-family:'Liberation Serif',serif;color:#d4d4d4;">fx</div>
<div class="t" style="left:562px;top:523.800px;font-size:16.500px;line-height:24px;color:#f6f6f6;-webkit-text-stroke:0.450px #f6f6f6;transform:scaleX(1.020);transform-origin:0 0;clip-path:inset(9px 3px 0 0);">jingyan</div>
<div class="t" style="left:617px;top:523.800px;font-size:16.500px;line-height:24px;color:#b0b0b0;transform:scaleX(0.930);transform-origin:0 0;clip-path:inset(15.800px 0 0 0);">.baidu</div>
<div class="t" style="left:660px;top:523.800px;font-size:16.500px;line-height:24px;color:#f6f6f6;-webkit-text-stroke:0.350px #f6f6f6;transform:scaleX(0.830);transform-origin:0 0;">.com</div>
</div></body></html>
